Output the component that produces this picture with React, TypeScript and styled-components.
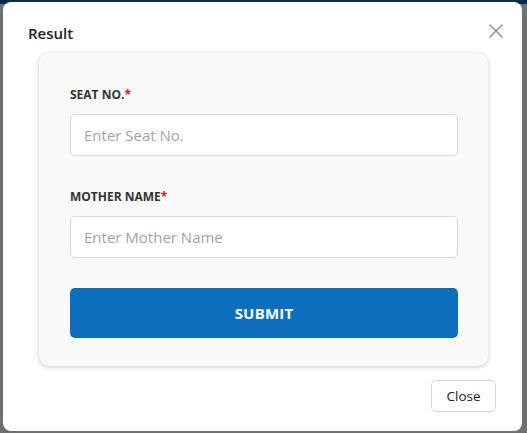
import { createGlobalStyle } from 'styled-components'
import styled from 'styled-components'

const GlobalStyle = createGlobalStyle`
	html, body {
		margin: 0;
		padding: 0;
		background: #707070;
		font-family: 'Open Sans', 'Liberation Sans', sans-serif;
	}
	* {
		box-sizing: border-box;
	}
`

const Backdrop = styled.div`
	width: 527px;
	height: 433px;
	background: linear-gradient(#0b2a4a 0, #0b2a4a 4px, #707070 4px);
	padding: 2px 5px 2px 3px;
`

const Modal = styled.div`
	height: 429px;
	background: #ffffff;
	border-radius: 8px;
	display: flex;
	flex-direction: column;
`

const Header = styled.div`
	display: flex;
	align-items: flex-start;
	justify-content: space-between;
	padding: 21px 18px 0 25px;
	height: 51px;
`

const Title = styled.h2`
	margin: 0;
	font-size: 15px;
	line-height: 20px;
	font-weight: 600;
	color: #222;
`

const CloseIcon = styled.button`
	border: none;
	background: none;
	padding: 0;
	width: 16px;
	height: 16px;
	display: flex;
	cursor: pointer;
`

const Body = styled.div`
	padding: 0 34px 0 36px;
`

const Card = styled.form`
	background: #f9f9f9;
	border-radius: 10px;
	box-shadow: 0 1px 5px rgba(0, 0, 0, 0.22);
	padding: 34px 30px 28px 31px;
	display: flex;
	flex-direction: column;
`

const Field = styled.div`
	display: flex;
	flex-direction: column;
	margin-bottom: 30px;

	& + & {
		margin-top: 3px;
	}
`

const Label = styled.label`
	font-size: 12px;
	font-weight: 700;
	color: #333;
	margin-bottom: 11px;
	line-height: 16px;
`

const Required = styled.span`
	color: #e0141e;
`

const Input = styled.input`
	height: 42px;
	border: 1px solid #d9d9d9;
	border-radius: 5px;
	background: #fff;
	padding: 0 13px;
	font-family: 'Open Sans', 'Liberation Sans', sans-serif;
	font-size: 15px;
	color: #333;

	&::placeholder {
		color: #a3a3a3;
	}

	&:focus {
		outline: none;
	}
`

const SubmitButton = styled.button`
	height: 50px;
	border: none;
	border-radius: 5px;
	background: #0d6ebd;
	color: #fff;
	font-family: 'Open Sans', 'Liberation Sans', sans-serif;
	font-size: 15px;
	font-weight: 700;
	letter-spacing: 0.2px;
	cursor: pointer;
`

const Footer = styled.div`
	display: flex;
	justify-content: flex-end;
	padding: 14px 26px 0 0;
`

const FooterButton = styled.button`
	width: 65px;
	height: 32px;
	padding: 0;
	border: 1px solid #d6d6d6;
	border-radius: 5px;
	background: #fff;
	font-family: 'Open Sans', 'Liberation Sans', sans-serif;
	font-size: 13.5px;
	color: #222;
	cursor: pointer;
`

const fields = [
	{ id: 'seat', label: 'SEAT NO.', placeholder: 'Enter Seat No.' },
	{ id: 'mother', label: 'MOTHER NAME', placeholder: 'Enter Mother Name' },
]

const App = () => {
	return (
		<>
			<GlobalStyle />
			<Backdrop>
				<Modal>
					<Header>
						<Title>Result</Title>
						<CloseIcon aria-label="close">
							<svg width="16" height="16" viewBox="0 0 16 16">
								<path
									d="M2 2L14 14M14 2L2 14"
									stroke="#8a8a8a"
									strokeWidth="1.4"
									strokeLinecap="round"
								/>
							</svg>
						</CloseIcon>
					</Header>
					<Body>
						<Card onSubmit={(e) => e.preventDefault()}>
							{fields.map((f) => (
								<Field key={f.id}>
									<Label htmlFor={f.id}>
										{f.label}
										<Required>*</Required>
									</Label>
									<Input id={f.id} type="text" placeholder={f.placeholder} />
								</Field>
							))}
							<SubmitButton type="submit">SUBMIT</SubmitButton>
						</Card>
					</Body>
					<Footer>
						<FooterButton>Close</FooterButton>
					</Footer>
				</Modal>
			</Backdrop>
		</>
	)
}

export default App
